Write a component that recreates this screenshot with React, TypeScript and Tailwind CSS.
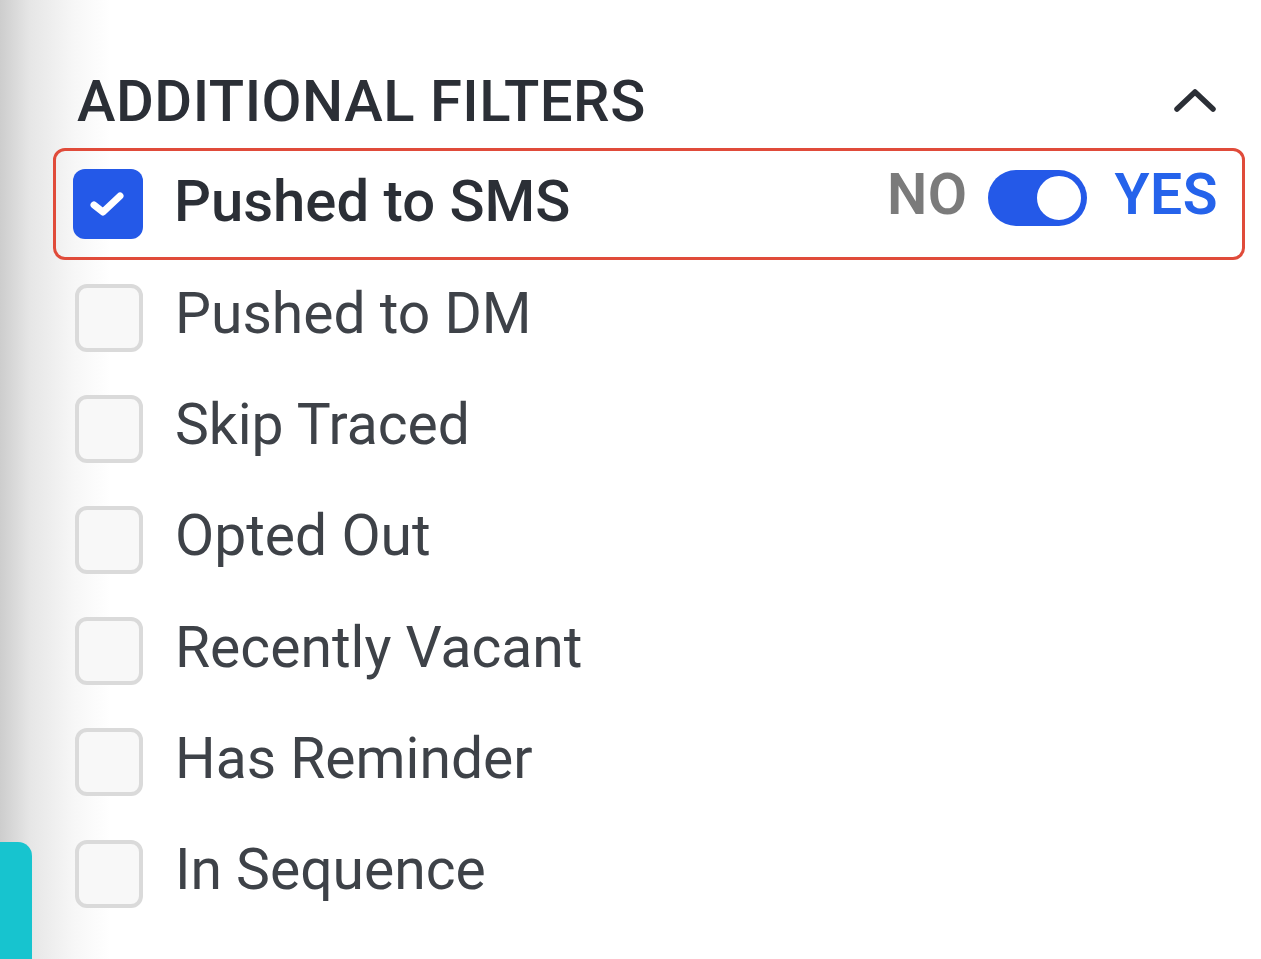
import React from 'react';

const rows = ['Pushed to DM', 'Skip Traced', 'Opted Out', 'Recently Vacant', 'Has Reminder', 'In Sequence'];

const App: React.FC = () => {
  return (
    <div
      className="relative w-[1261px] h-[959px] overflow-hidden bg-[linear-gradient(to_right,#cdcdcd_0px,#e6e6e6_30px,#f7f7f7_75px,#ffffff_110px)]"
      style={{ fontFamily: 'Roboto, "Liberation Sans", sans-serif' }}
    >
      <div className="pl-[53px] pr-[16px] pt-[68px]">
        {/* Header */}
        <div className="flex items-center justify-between pl-[24px] pr-[28px] h-[66px] mb-[14px]">
          <h2 className="text-[58px] leading-none font-medium tracking-[0.5px] text-[#2b2f36]">ADDITIONAL FILTERS</h2>
          <svg width="44" height="30" viewBox="0 0 44 30" fill="none">
            <path d="M4 23 L22 6 L40 23" stroke="#2b2f36" strokeWidth="5.5" strokeLinecap="round" strokeLinejoin="round" />
          </svg>
        </div>

        {/* Active filter */}
        <div className="flex items-center h-[112px] border-[3px] border-[#e04b3a] rounded-[12px] pl-[17px] pr-[24px]">
          <div className="w-[70px] h-[70px] rounded-[12px] bg-[#2459e8] flex items-center justify-center">
            <svg width="40" height="34" viewBox="0 0 40 34" fill="none">
              <path d="M6 18 L15 25 L32 9" stroke="#fff" strokeWidth="7" strokeLinecap="round" strokeLinejoin="round" />
            </svg>
          </div>
          <span className="ml-[31px] mb-[6px] text-[58px] leading-none font-medium text-[#2b2f36]">Pushed to SMS</span>
          <div className="ml-auto flex items-center -mt-[20px]">
            <span className="text-[57px] leading-none font-semibold tracking-[0.5px] text-[#7b7b7b]">NO</span>
            <div className="ml-[20px] mt-[7px] w-[99px] h-[56px] rounded-full bg-[#2459e8] flex items-center justify-end pr-[3px]">
              <div className="w-[50px] h-[50px] rounded-full bg-white border-[3px] border-[#2459e8]" />
            </div>
            <span className="ml-[28px] text-[57px] leading-none font-semibold tracking-[0.5px] text-[#2563eb]">YES</span>
          </div>
        </div>

        {/* Other filters */}
        <div className="pt-[2px]">
          {rows.map((r) => (
            <div key={r} className="flex items-center h-[111.2px] pl-[22px]">
              <div className="w-[68px] h-[68px] rounded-[12px] border-[4px] border-[#dadada] bg-[#f8f8f8]" />
              <span className="ml-[32px] mb-[8px] text-[57px] leading-none tracking-[0px] text-[#3e4248]">{r}</span>
            </div>
          ))}
        </div>
      </div>

      {/* Teal tab */}
      <div className="absolute left-0 top-[842px] w-[32px] h-[140px] rounded-tr-[14px] bg-[#17c4cf]" />
    </div>
  );
};

export default App;
